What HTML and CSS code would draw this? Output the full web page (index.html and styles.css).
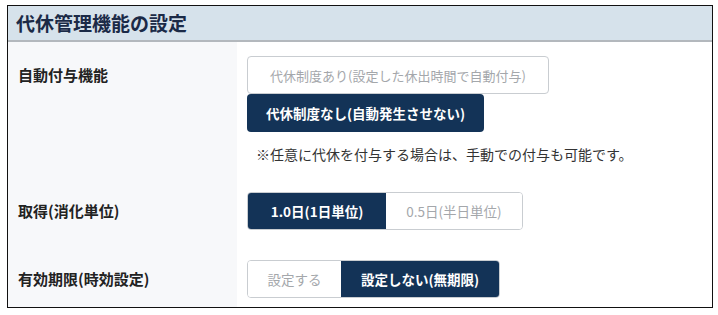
FILE: index.html
```html
<!DOCTYPE html>
<html lang="ja">
<head>
<meta charset="utf-8">
<link rel="stylesheet" href="styles.css">
</head>
<body>
<div class="panel">
  <div class="panel-head">代休管理機能の設定</div>
  <div class="grid">
    <div class="label row1">自動付与機能</div>
    <div class="content row1">
      <div class="btn btn-outline btn-wide">代休制度あり(設定した休出時間で自動付与)</div>
      <div class="btn btn-dark btn-mid">代休制度なし(自動発生させない)</div>
      <p class="note">※任意に代休を付与する場合は、手動での付与も可能です。</p>
    </div>
    <div class="label row2">取得(消化単位)</div>
    <div class="content row2">
      <div class="seg">
        <div class="seg-item on w138">1.0日(1日単位)</div>
        <div class="seg-item w137">0.5日(半日単位)</div>
      </div>
    </div>
    <div class="label row3">有効期限(時効設定)</div>
    <div class="content row3">
      <div class="seg">
        <div class="seg-item w94">設定する</div>
        <div class="seg-item on w158">設定しない(無期限)</div>
      </div>
    </div>
  </div>
</div>
</body>
</html>
```
FILE: styles.css
```css
* { box-sizing: border-box; }
html, body { margin: 0; padding: 0; background: #fff; }
body {
  padding: 5px 0 0 7px;
  font-family: "Noto Sans CJK JP", "Noto Sans", sans-serif;
  color: #222;
}
.panel {
  width: 706px;
  height: 303px;
  border: 1px solid #111;
  display: flex;
  flex-direction: column;
  overflow: hidden;
}
.panel-head {
  height: 36px;
  background: #d6e2eb;
  border-bottom: 2px solid #b3b8bd;
  padding-left: 8px;
  font-size: 19px;
  font-weight: 700;
  line-height: 33px;
  color: #1b2a47;
}
.grid {
  flex: 1;
  display: grid;
  grid-template-columns: 229px 1fr;
  grid-template-rows: auto auto 1fr;
}
.label {
  background: #f7f8fa;
  padding-left: 10px;
  font-size: 15px;
  font-weight: 700;
  line-height: 38px;
  color: #222;
}
.content { padding-left: 10px; }
.row1 { padding-top: 14px; }
.row2 { padding-top: 26px; }
.row3 { padding-top: 30px; }
.btn {
  height: 38px;
  border-radius: 4px;
  font-size: 13px;
  display: flex;
  align-items: center;
  justify-content: center;
}
.btn-outline {
  border: 1px solid #c9cdd1;
  color: #a4a7ab;
  background: #fff;
}
.btn-dark {
  background: #133357;
  color: #fff;
  font-weight: 700;
  font-size: 13.5px;
}
.btn-wide { width: 302px; }
.btn-mid { width: 237px; }
.note {
  margin: 10px 0 0 9px;
  font-size: 14px;
  line-height: 24px;
  color: #333;
}
.seg {
  display: inline-flex;
  height: 38px;
  border: 1px solid #c9cdd1;
  border-radius: 4px;
  overflow: hidden;
}
.seg-item {
  display: flex;
  align-items: center;
  justify-content: center;
  font-size: 13.5px;
  color: #a4a7ab;
  background: #fff;
}
.seg-item.on {
  background: #133357;
  color: #fff;
  font-weight: 700;
}
.w138 { width: 138px; }
.w137 { width: 136px; }
.w94 { width: 93px; }
.w158 { width: 158px; }
```
